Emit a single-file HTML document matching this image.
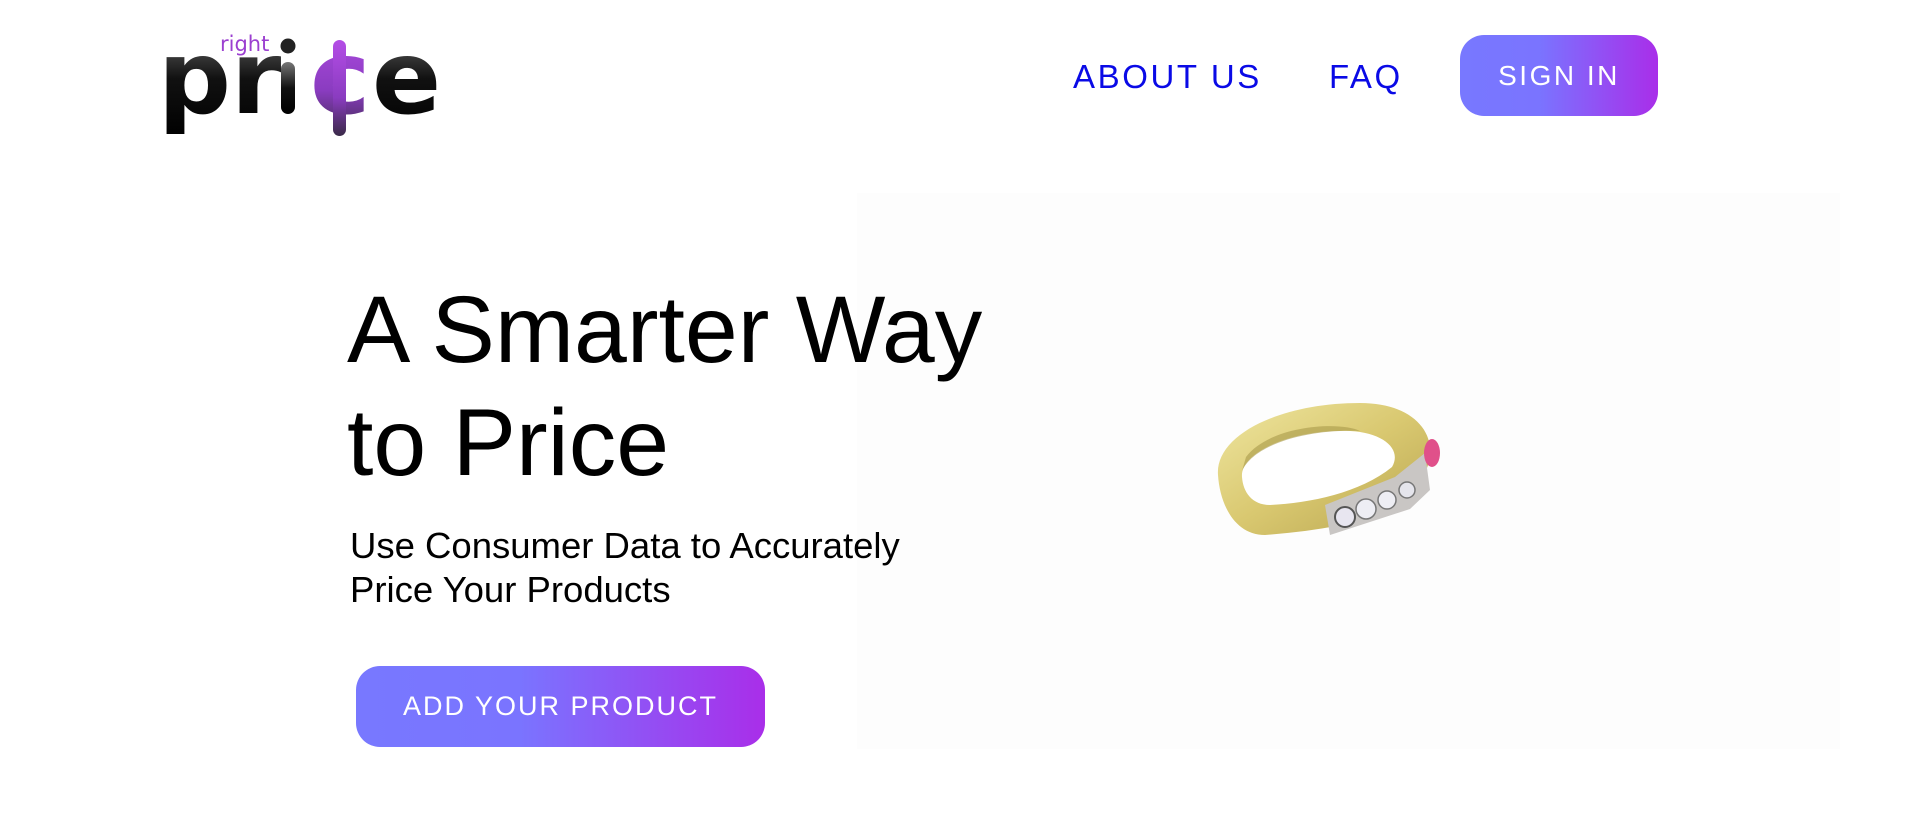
<!DOCTYPE html>
<html><head><meta charset="utf-8">
<style>
html,body{margin:0;padding:0;background:#fff;width:1920px;height:831px;overflow:hidden;font-family:"Liberation Sans",Arial,sans-serif;}
.abs{position:absolute}
.nav{color:#0a0ae6;font-size:33px;letter-spacing:2.6px;top:58px;}
.btn{background:linear-gradient(90deg,#7878ff 0%,#7a74ff 40%,#a92ee9 100%);color:#fff;display:flex;align-items:center;justify-content:center;}
</style></head><body>
<div class="abs" style="left:857px;top:193px;width:983px;height:556px;background:#fdfdfd;"></div>

<svg class="abs" style="left:150px;top:20px" width="310" height="120" viewBox="0 0 310 120">
<defs>
<linearGradient id="bk" x1="0" y1="0" x2="0" y2="1"><stop offset="0" stop-color="#777"/><stop offset=".5" stop-color="#111"/><stop offset="1" stop-color="#000"/></linearGradient>
<linearGradient id="pu" x1="0" y1="0" x2="0" y2="1"><stop offset="0" stop-color="#b44de6"/><stop offset=".6" stop-color="#8a3cc0"/><stop offset="1" stop-color="#3a2a48"/></linearGradient>
</defs>
<text x="70" y="31" font-family="DejaVu Sans, sans-serif" font-size="21" fill="#9b3fd0">right</text>
<text x="8" y="93" font-family="DejaVu Sans, sans-serif" font-weight="bold" font-size="102" fill="url(#bk)">pr</text>
<rect x="131" y="42" width="14" height="52" rx="7" fill="url(#bk)"/>
<circle cx="138" cy="26" r="7.5" fill="#222"/>
<text x="160" y="93" font-family="DejaVu Sans, sans-serif" font-weight="bold" font-size="102" fill="url(#pu)">c</text>
<rect x="183" y="20" width="13" height="96" rx="6.5" fill="url(#pu)"/>
<text x="222" y="93" font-family="DejaVu Sans, sans-serif" font-weight="bold" font-size="102" fill="url(#bk)">e</text>
</svg>

<div class="abs nav" style="left:1073px;">ABOUT US</div>
<div class="abs nav" style="left:1329px;">FAQ</div>
<div class="abs btn" style="left:1460px;top:35px;width:198px;height:81px;border-radius:24px;font-size:28px;letter-spacing:2.5px;">SIGN IN</div>

<div class="abs" style="left:347px;top:274px;font-size:95px;line-height:113px;color:#000;">A Smarter Way<br>to Price</div>
<div class="abs" style="left:350px;top:524px;font-size:36.5px;line-height:44px;color:#000;">Use Consumer Data to Accurately<br>Price Your Products</div>
<div class="abs btn" style="left:356px;top:666px;width:409px;height:81px;border-radius:24px;font-size:27px;letter-spacing:2px;">ADD YOUR PRODUCT</div>

<svg class="abs" style="left:1210px;top:395px" width="240" height="150" viewBox="0 0 240 150">
<defs><linearGradient id="gd" x1="0" y1="0" x2="1" y2="1"><stop offset="0" stop-color="#efe6a0"/><stop offset=".5" stop-color="#d9c870"/><stop offset="1" stop-color="#b8a550"/></linearGradient></defs>
<path d="M8 80 C5 40 70 8 150 8 C205 8 228 40 218 70 L208 100 C170 125 120 135 55 140 C25 140 10 110 8 80 Z" fill="url(#gd)"/>
<path d="M32 82 C30 58 80 34 140 36 C175 38 192 55 182 72 C150 98 100 108 60 110 C42 110 33 97 32 82 Z" fill="#fff"/>
<path d="M32 76 C45 48 100 34 150 36 C130 26 60 30 36 62 Z" fill="#a9994a" opacity=".6"/>
<path d="M115 110 L185 82 L215 58 L220 95 L200 114 L120 140 Z" fill="#c9c6c4"/>
<circle cx="135" cy="122" r="10" fill="#e8e6f0" stroke="#555" stroke-width="2"/>
<circle cx="156" cy="114" r="10" fill="#eeeef4" stroke="#777" stroke-width="1.5"/>
<circle cx="177" cy="105" r="9" fill="#eeeef4" stroke="#777" stroke-width="1.5"/>
<circle cx="197" cy="95" r="8" fill="#e5e5ec" stroke="#777" stroke-width="1.5"/>
<ellipse cx="222" cy="58" rx="8" ry="14" fill="#e0508a"/>
</svg>
</body></html>
